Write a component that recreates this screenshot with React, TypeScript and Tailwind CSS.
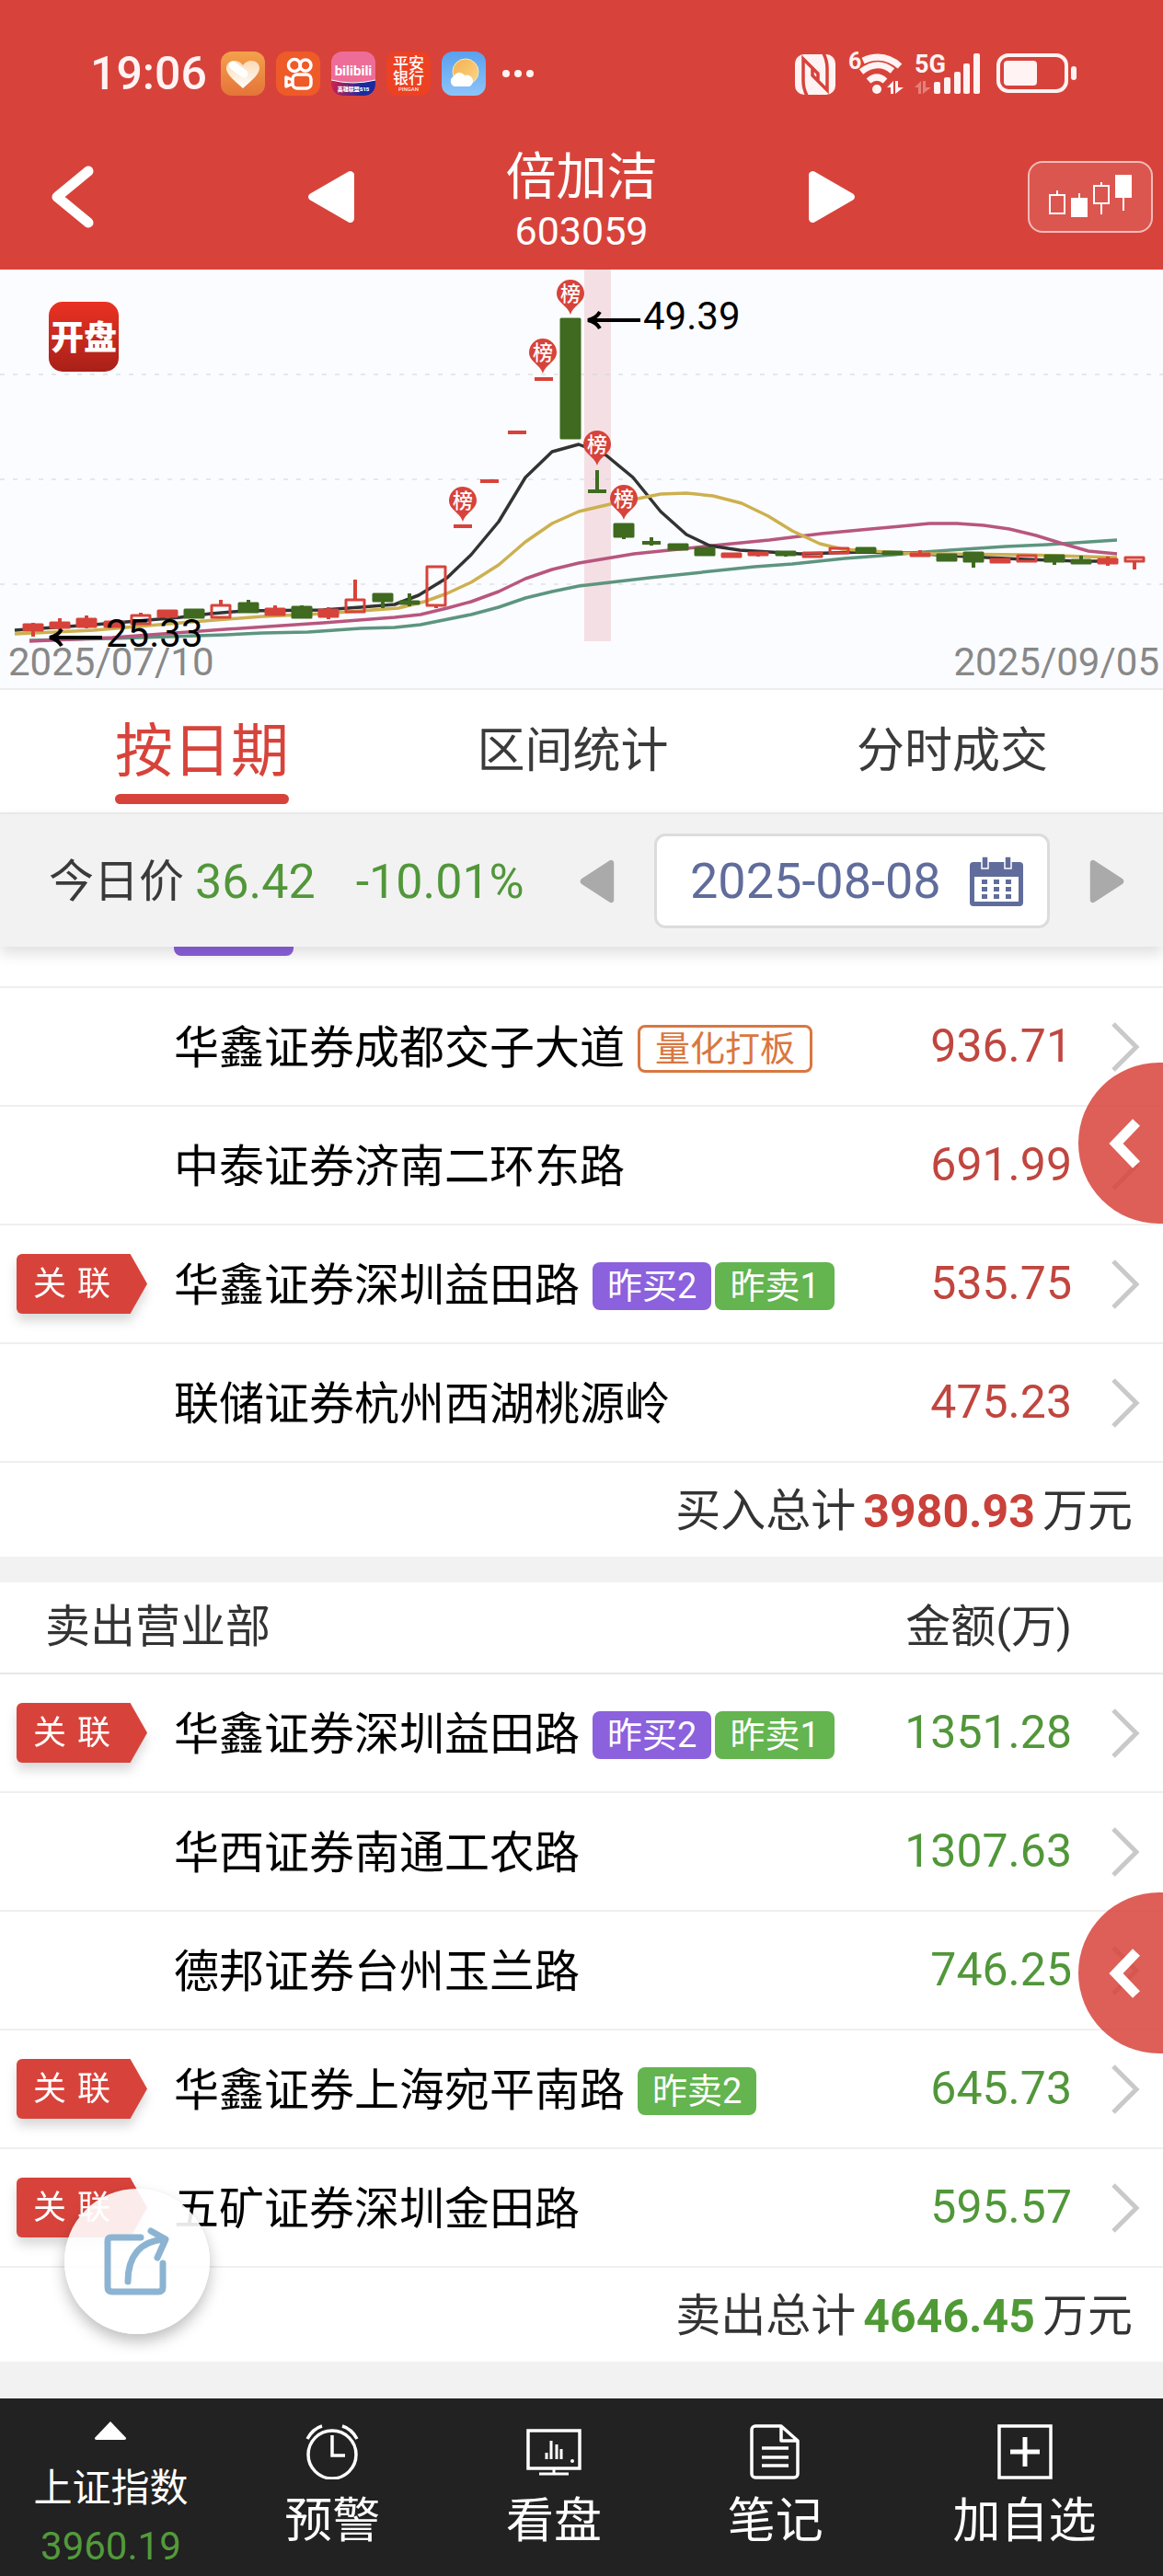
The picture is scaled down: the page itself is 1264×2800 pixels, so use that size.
import { ReactNode, useState } from 'react'

const RED = '#d7433b'
const GREEN = '#3f6a20'

type Candle = {
    up: boolean
    body: [number, number]
    high?: number
    low?: number
    kind?: 'hollow' | 'flat'
}

// y values are in chart units, one entry per trading day
const candles: Candle[] = [
    { up: true, body: [386, 392], high: 384, low: 399 },
    { up: true, body: [384, 389], high: 379, low: 392 },
    { up: true, body: [380, 388], high: 376, low: 390 },
    { up: true, body: [383, 388] },
    { up: true, body: [376, 385], high: 373, kind: 'hollow' },
    { up: true, body: [371, 377], low: 379 },
    { up: false, body: [370, 378] },
    { up: true, body: [365, 378], high: 359, kind: 'hollow' },
    { up: false, body: [363, 372], high: 359 },
    { up: true, body: [369, 375], high: 365, low: 376 },
    { up: false, body: [367, 378], high: 365 },
    { up: true, body: [370, 377], high: 367, low: 380 },
    { up: true, body: [359, 372], high: 337, kind: 'hollow' },
    { up: false, body: [353, 360], low: 368 },
    { up: false, body: [361, 363], high: 352, low: 366 },
    { up: true, body: [323, 365], low: 368, kind: 'hollow' },
    { up: true, body: [279, 279], kind: 'flat' },
    { up: true, body: [230, 230], kind: 'flat' },
    { up: true, body: [177, 177], kind: 'flat' },
    { up: true, body: [119, 119], kind: 'flat' },
    { up: false, body: [54, 183] },
    { up: false, body: [241, 241], high: 218, kind: 'flat' },
    { up: false, body: [277, 290], low: 293 },
    { up: false, body: [297, 297], high: 291, low: 300, kind: 'flat' },
    { up: false, body: [299, 304] },
    { up: false, body: [303, 310] },
    { up: true, body: [309, 312] },
    { up: true, body: [308, 310], low: 312 },
    { up: false, body: [307, 310], low: 312 },
    { up: true, body: [308, 312], kind: 'hollow' },
    { up: true, body: [303, 308], kind: 'hollow' },
    { up: false, body: [303, 307] },
    { up: false, body: [307, 309] },
    { up: true, body: [309, 311], high: 305 },
    { up: false, body: [310, 316] },
    { up: false, body: [308, 317], low: 324 },
    { up: true, body: [315, 318] },
    { up: true, body: [311, 317], kind: 'hollow' },
    { up: false, body: [311, 317], low: 321 },
    { up: false, body: [316, 319], high: 311 },
    { up: true, body: [315, 319], high: 312, low: 322 },
    { up: true, body: [313, 317], low: 326, kind: 'hollow' },
]

const averages = [
    { color: '#5d957f', points: '32,403 122,401 245,397 286,395 335,394 392,390 429,389 457,386 512,375 542,367 571,357 600,350 629,344 706,335 820,323 861,320 918,314 971,310 991,308 1032,305 1093,301 1138,299 1214,294' },
    { color: '#b8567e', points: '32,404 122,400 245,391 351,384 429,378 457,375 486,368 512,361 542,350 571,336 600,326 629,319 689,309 775,300 836,294 893,287 946,282 979,279 1010,276 1040,276 1069,278 1097,282 1126,289 1155,298 1183,306 1214,309' },
    { color: '#333333', points: '16,392 102,386 196,378 229,374 265,371 351,370 392,367 429,364 455,354 486,335 512,310 542,274 571,226 600,198 629,190 659,202 688,226 718,263 746,288 771,300 804,305 869,309 938,307 991,308 1032,311 1114,315 1175,317 1214,317' },
    { color: '#cdb04f', points: '16,396 102,392 196,384 286,377 351,374 433,368 461,361 486,352 512,340 542,321 571,296 600,276 629,263 663,255 718,244 746,243 775,246 806,254 835,268 861,284 891,298 916,304 979,308 1016,309 1114,310 1214,313' },
]

const pins = [
    { x: 503, y: 274 },
    { x: 590, y: 113 },
    { x: 620, y: 49 },
    { x: 649, y: 213 },
    { x: 678, y: 272 },
]

type Tag = { text: string; kind: 'outline' | 'purple' | 'green' }
type Seat = { name: string; amount: string; linked?: boolean; tags?: Tag[] }

const tagStyles = {
    outline: 'border-[3px] border-[#d9773f] text-[#d9773f] px-4 mr-1',
    purple: 'bg-[#8b61dd] text-white px-4',
    green: 'bg-[#64b44f] text-white px-4',
}

const buySeats: Seat[] = [
    { name: '华鑫证券成都交子大道', amount: '936.71', tags: [{ text: '量化打板', kind: 'outline' }] },
    { name: '中泰证券济南二环东路', amount: '691.99' },
    { name: '华鑫证券深圳益田路', amount: '535.75', linked: true, tags: [{ text: '昨买2', kind: 'purple' }, { text: '昨卖1', kind: 'green' }] },
    { name: '联储证券杭州西湖桃源岭', amount: '475.23' },
]

const sellSeats: Seat[] = [
    { name: '华鑫证券深圳益田路', amount: '1351.28', linked: true, tags: [{ text: '昨买2', kind: 'purple' }, { text: '昨卖1', kind: 'green' }] },
    { name: '华西证券南通工农路', amount: '1307.63' },
    { name: '德邦证券台州玉兰路', amount: '746.25' },
    { name: '华鑫证券上海宛平南路', amount: '645.73', linked: true, tags: [{ text: '昨卖2', kind: 'green' }] },
    { name: '五矿证券深圳金田路', amount: '595.57', linked: true },
]

const tabs = ['按日期', '区间统计', '分时成交']

const Triangle = ({ className, flip }: { className: string; flip?: boolean }) => (
    <svg viewBox="0 0 50 56" preserveAspectRatio="none" className={className} fill="currentColor" stroke="currentColor" strokeWidth="8" strokeLinejoin="round">
        <path d={flip ? 'M5 5v46l40-23z' : 'M45 5v46L5 28z'} />
    </svg>
)

const StatusBar = () => (
    <div className="flex items-center justify-between pl-[98px] pr-[94px] h-12 text-[#fff3f3]">
        <div className="flex items-center gap-3">
            <span className="mr-[3px] text-[50px] leading-[48px] font-medium">19:06</span>
            <svg viewBox="0 0 48 48" className="size-12">
                <defs>
                    <linearGradient id="heartBg" x2="0" y2="1"><stop stopColor="#f3a14b" /><stop offset="1" stopColor="#e5743a" /></linearGradient>
                    <linearGradient id="heartFill" x2="0" y2="1"><stop stopColor="#fbd9b4" /><stop offset="1" stopColor="#fff" /></linearGradient>
                </defs>
                <rect width="48" height="48" rx="12" fill="url(#heartBg)" />
                <path d="M24 40C18 34 6 26 6 18c0-9 13-11 18-3 5-8 18-6 18 3 0 8-12 16-18 22z" fill="url(#heartFill)" />
                <path d="M13 15l12 9" stroke="#fff" strokeWidth="9" strokeLinecap="round" />
            </svg>
            <svg viewBox="0 0 48 48" className="size-12" fill="none" stroke="#fff" strokeWidth="3.5">
                <rect width="48" height="48" rx="12" fill="#ef5a29" stroke="none" />
                <circle cx="20" cy="15" r="6.5" />
                <circle cx="32" cy="15" r="6" />
                <rect x="18" y="25" width="20" height="15" rx="5" />
                <path d="M18 31l-7-3v10l7-3" strokeLinejoin="round" />
            </svg>
            <svg viewBox="0 0 48 48" className="size-12">
                <defs>
                    <clipPath id="biliClip"><rect width="48" height="48" rx="12" /></clipPath>
                    <linearGradient id="biliBand"><stop stopColor="#d3204b" /><stop offset="0.7" stopColor="#1b2a9c" /></linearGradient>
                </defs>
                <g clipPath="url(#biliClip)">
                    <rect width="48" height="48" fill="#ee6d98" />
                    <path d="M0 31q24 6 48 0v17H0z" fill="url(#biliBand)" />
                    <path d="M0 31q24 6 48 0" stroke="#fff" fill="none" />
                </g>
                <text x="24" y="26" textAnchor="middle" fontSize="15" fontWeight="700" fill="#fff">bilibili</text>
                <text x="24" y="43" textAnchor="middle" fontSize="6" fontWeight="900" fill="#fff">英雄联盟S15</text>
            </svg>
            <svg viewBox="0 0 48 48" className="size-12">
                <rect width="48" height="48" rx="12" fill="#ec4123" />
                <text x="24" y="19" textAnchor="middle" fontSize="17" fontWeight="500" fill="#fff">平安</text>
                <text x="24" y="35" textAnchor="middle" fontSize="17" fontWeight="500" fill="#fff">银行</text>
                <text x="24" y="43" textAnchor="middle" fontSize="6" fill="#fff">PINGAN</text>
            </svg>
            <svg viewBox="0 0 48 48" className="size-12">
                <defs>
                    <linearGradient id="skyBg" x2="0" y2="1"><stop stopColor="#5aa0ee" /><stop offset="1" stopColor="#8dc4f8" /></linearGradient>
                    <linearGradient id="sun" x2="1" y2="1"><stop stopColor="#f4b04e" /><stop offset="1" stopColor="#fbd68a" /></linearGradient>
                </defs>
                <rect width="48" height="48" rx="12" fill="url(#skyBg)" />
                <circle cx="26" cy="22" r="14" fill="url(#sun)" stroke="#ffe9a8" />
                <path d="M14 38a6 6 0 0 1-1-11 7 7 0 0 1 12-1 6 6 0 0 1 5 12z" fill="#fff" />
            </svg>
            <svg viewBox="0 0 36 8" className="ml-[6px] w-9 h-2" fill="currentColor">
                <circle cx="4" cy="4" r="4" />
                <circle cx="17" cy="4" r="4" />
                <circle cx="30" cy="4" r="4" />
            </svg>
        </div>
        <svg viewBox="864 54 306 50" className="w-[306px] h-[50px]" fill="currentColor">
            <rect x="864" y="58" width="44" height="44" rx="10" />
            <path d="M877 103c-2-4-4-9-4-16V63l16 16v8M895 57c2 4 4 9 4 16v24l-16-16v-8" fill="none" stroke="#d7433b" strokeWidth="3.5" />
            <text x="922" y="74" fontSize="25" fontWeight="700">6</text>
            <g fill="none" stroke="currentColor" strokeWidth="7">
                <path d="M938 65q22-10 40 6" />
                <path d="M936 77q18-14 34-1" />
                <path d="M944 87q9-8 18 0" />
            </g>
            <circle cx="953" cy="96" r="5" />
            <path d="M964 94l7-7v14h-3v-7zM973 87h3v7h6l-9 7z" />
            <text x="994" y="78" fontSize="27" fontWeight="700">5G</text>
            <path d="M994 94l7-7v14h-3v-7zM1003 87h3v7h6l-9 7z" opacity="0.35" />
            <rect x="1015" y="88" width="7" height="13" rx="2" />
            <rect x="1026" y="83" width="7" height="18" rx="2" />
            <rect x="1037" y="77" width="7" height="24" rx="2" />
            <rect x="1047" y="68" width="7" height="33" rx="2" />
            <rect x="1058" y="57" width="7" height="44" rx="2" />
            <rect x="1085" y="59" width="74" height="39" rx="11" fill="none" stroke="currentColor" strokeWidth="4" />
            <rect x="1091" y="65" width="36" height="27" rx="4" />
            <rect x="1164" y="71" width="6" height="15" rx="3" />
        </svg>
    </div>
)

const Header = () => (
    <header className="bg-[#d7433b] pt-14 pb-px text-white">
        <StatusBar />
        <div className="mt-8 h-[156px] grid grid-cols-[1fr_auto_1fr] items-center">
            <button aria-label="返回" className="justify-self-start ml-[54px]">
                <svg viewBox="0 0 50 72" className="w-[50px] h-[72px]" fill="none" stroke="currentColor" strokeWidth="11" strokeLinecap="round" strokeLinejoin="round">
                    <path d="M42 8L8 36l34 28" />
                </svg>
            </button>
            <div className="flex items-center gap-[163px]">
                <button aria-label="上一只"><Triangle className="w-[52px] h-[58px]" /></button>
                <div className="pt-4 text-center">
                    <h1 className="text-[55px] leading-[58px]">倍加洁</h1>
                    <p className="text-[43px] leading-[60px]">603059</p>
                </div>
                <button aria-label="下一只"><Triangle flip className="w-[52px] h-[58px]" /></button>
            </div>
            <button aria-label="K线" className="justify-self-end mr-[11px] w-[136px] h-[78px] flex items-center justify-center rounded-2xl border-2 border-[#f3bcb9] bg-white/10">
                <svg viewBox="0 0 92 48" className="w-[92px] h-12" stroke="currentColor" strokeWidth="2">
                    <path d="M10 17v5M34 20v6M58 8v4M58 32v11M82 25v14" />
                    <rect x="2" y="22" width="16" height="20" fill="none" />
                    <rect x="26" y="26" width="16" height="19" fill="currentColor" />
                    <rect x="50" y="12" width="16" height="19" fill="none" />
                    <rect x="74" y="1" width="16" height="23" fill="currentColor" />
                </svg>
            </button>
        </div>
    </header>
)

const CandleMark = ({ candle, x }: { candle: Candle; x: number }) => {
    const color = candle.up ? RED : GREEN
    const [top, bottom] = candle.body

    return (
        <g stroke={color} fill={candle.kind === 'hollow' ? 'none' : color}>
            {candle.high !== undefined && <path d={`M${x} ${candle.high}V${top}`} strokeWidth="4" />}
            {candle.low !== undefined && <path d={`M${x} ${bottom}V${candle.low}`} strokeWidth="4" />}
            {candle.kind === 'flat' ? (
                <path d={`M${x - 10} ${top}h20`} strokeWidth="4" />
            ) : (
                <rect x={x - 10} y={top} width="20" height={bottom - top} strokeWidth="3" strokeLinejoin="round" />
            )}
        </g>
    )
}

const Chart = () => (
    <section className="bg-[#fbfcff] border-b-2 border-[#ececec]">
        <svg viewBox="0 0 1264 404" className="block w-full overflow-visible">
            <defs>
                <linearGradient id="logoBg" x2="0" y2="1"><stop stopColor="#ea3223" /><stop offset="1" stopColor="#a82018" /></linearGradient>
            </defs>
            <rect x="635" width="29" height="404" fill="#f4e0e4" />
            {[114, 228, 342].map((y) => (
                <path key={y} d={`M0 ${y}H1264`} stroke="#cfd2d6" strokeWidth="1" strokeDasharray="5 9" />
            ))}
            <rect x="53" y="35" width="76" height="76" rx="15" fill="url(#logoBg)" />
            <text x="91" y="87" textAnchor="middle" fontSize="36" fontWeight="900" fill="#fff">开盘</text>
            {averages.map((line) => (
                <polyline key={line.color} points={line.points} fill="none" stroke={line.color} strokeWidth="3.5" strokeLinejoin="round" />
            ))}
            {candles.map((candle, i) => (
                <CandleMark key={i} candle={candle} x={Math.round(36 + i * 29.2)} />
            ))}
            {pins.map((pin) => (
                <g key={pin.x}>
                    <path d={`M${pin.x} ${pin.y}c-3-10-15-13-15-23a15 15 0 0 1 30 0c0 10-12 13-15 23z`} fill={RED} />
                    <text x={pin.x} y={pin.y - 15} textAnchor="middle" fontSize="22" fontWeight="500" fill="#fff">榜</text>
                </g>
            ))}
            <g fill="none" stroke="#000" strokeWidth="4">
                <path d="M696 55H640M652 46q-4 7-13 9q9 2 13 9" />
                <path d="M111 400H56M67 391q-4 7-13 9q9 2 13 9" />
            </g>
            <text x="699" y="65" fontSize="42">49.39</text>
            <text x="115" y="410" fontSize="42">25.33</text>
        </svg>
        <div className="flex justify-between pl-[9px] pr-1 pb-[6px] text-[42px] leading-[45px] text-[#888]">
            <span>2025/07/10</span>
            <span>2025/09/05</span>
        </div>
    </section>
)

const DateBar = () => (
    <div className="relative z-10 flex items-center justify-between h-[146px] pl-[53px] pr-[42px] border-t-2 border-[#e8e8e8] bg-[#f2f2f2] shadow-[0_8px_14px_rgba(0,0,0,0.12)] leading-[60px]">
        <div className="flex items-center pt-1 text-[52px] text-[#51973a]">
            <p className="text-[49px] text-[#3a3a3a]">今日价</p>
            <p className="ml-3">36.42</p>
            <p className="ml-11">-10.01%</p>
        </div>
        <div className="flex items-center gap-[43px] pt-px text-[#aaa]">
            <button aria-label="前一天"><Triangle className="w-[38px] h-12" /></button>
            <button className="flex items-center justify-between w-[430px] h-[103px] pl-9 pr-[26px] rounded-xl border-[3px] border-[#dcdcdc] bg-white text-[54px] text-[#606c9b]">
                2025-08-08
                <svg viewBox="0 0 58 54" className="w-[58px] h-[54px]" fill="currentColor">
                    <path fillRule="evenodd" d="M4 6H54a4 4 0 0 1 4 4V50a4 4 0 0 1-4 4H4a4 4 0 0 1-4-4V10a4 4 0 0 1 4-4zM5 22V49H53V22z" />
                    <path d="M13 0h7v13h-7zM38 0h7v13h-7z" stroke="#fff" strokeWidth="1.5" />
                    {[13, 26, 39].map((x) => (
                        <path key={x} d={`M${x} 25h6v5h-6zM${x} 33h6v5h-6zM${x} 41h6v5h-6z`} />
                    ))}
                </svg>
            </button>
            <button aria-label="后一天"><Triangle flip className="w-[38px] h-12" /></button>
        </div>
    </div>
)

const LinkedBadge = () => (
    <span className="drop-shadow-[0_8px_6px_rgba(0,0,0,0.15)]">
        <span className="flex items-center gap-3 w-[142px] h-[65px] pl-[18px] rounded-l-md bg-[#d7433b] text-white text-[36px] leading-[64px] [clip-path:polygon(0_0,87%_0,100%_50%,87%_100%,0_100%)]">
            <span>关</span>
            <span>联</span>
        </span>
    </span>
)

const SeatTable = ({ seats, color, children }: { seats: Seat[]; color: string; children?: ReactNode }) => (
    <table className="w-full border-separate border-spacing-0">
        {children}
        <tbody>
            {seats.map((seat) => (
                <tr key={seat.name} className="h-[129px]">
                    <td className="p-0 border-b-2 border-[#efefef]">
                        <div className="flex items-center">
                            <div className="w-[189px] pl-[18px] shrink-0">{seat.linked && <LinkedBadge />}</div>
                            <a href="#" className="pt-1 text-[49px] leading-[64px] whitespace-nowrap">{seat.name}</a>
                            <div className="flex gap-1 pl-[14px] pt-1">
                                {seat.tags?.map((tag) => (
                                    <span key={tag.text} className={`flex items-center h-[52px] rounded-lg text-[38px] leading-[46px] whitespace-nowrap ${tagStyles[tag.kind]}`}>
                                        {tag.text}
                                    </span>
                                ))}
                            </div>
                        </div>
                    </td>
                    <td className={`p-0 pb-[2px] border-b-2 border-[#efefef] text-right text-[50px] leading-[60px] ${color}`}>{seat.amount}</td>
                    <td className="p-0 w-[99px] border-b-2 border-[#efefef]">
                        <svg viewBox="0 0 32 54" className="ml-[42px] w-8 h-[54px]" fill="none" stroke="#c9c9c9" strokeWidth="5">
                            <path d="M3 2l25 25L3 52" />
                        </svg>
                    </td>
                </tr>
            ))}
        </tbody>
    </table>
)

const Total = ({ label, value, color }: { label: string; value: string; color: string }) => (
    <p className="flex items-center justify-end gap-2 h-[102px] pt-1 pr-[33px] text-[49px] leading-[64px] text-[#333]">
        {label}
        <strong className={`text-[50px] font-bold ${color}`}>{value}</strong>
        万元
    </p>
)

const SideHandle = ({ className }: { className: string }) => (
    <button aria-label="展开" className={`absolute -right-[83px] size-[175px] rounded-full bg-[#d7433b]/85 ${className}`}>
        <svg viewBox="0 0 34 54" className="ml-[33px] w-[34px] h-[54px]" fill="none" stroke="#fff" strokeWidth="11">
            <path d="M30 4L8 27l22 23" />
        </svg>
    </button>
)

const NavItem = ({ label, className, children }: { label: string; className: string; children: ReactNode }) => (
    <a href="#" className={`flex flex-col items-center pt-7 ${className}`}>
        <svg viewBox="0 0 60 60" className="size-[60px]" fill="none" stroke="currentColor" strokeWidth="3.5">{children}</svg>
        <span className="mt-[14px] text-[52px] leading-[64px]">{label}</span>
    </a>
)

const BottomNav = () => (
    <nav className="flex h-[193px] bg-[#222] text-white">
        <a href="#" className="flex-4 flex flex-col items-center pt-[25px]">
            <svg viewBox="0 0 36 21" className="w-9 h-[21px]" fill="currentColor"><path d="M18 0l18 19q0 2-2 2H2q-2 0-2-2z" /></svg>
            <span className="mt-[22px] text-[42px] leading-[62px]">上证指数</span>
            <span className="text-[42px] leading-[64px] text-[#539a3b]">3960.19</span>
        </a>
        <NavItem label="预警" className="flex-4">
            <circle cx="30" cy="33" r="26" />
            <path d="M30 12v22h14M3 16Q9 5 19 2M57 16Q51 5 41 2" />
        </NavItem>
        <NavItem label="看盘" className="flex-4">
            <rect x="2" y="7" width="56" height="41" />
            <path d="M30 48v6M14 54h32M22 31v7M27 18v20M33 22v16M38 27v11" strokeWidth="3" />
            <circle cx="50" cy="40" r="2" fill="currentColor" stroke="none" />
        </NavItem>
        <NavItem label="笔记" className="flex-4">
            <path d="M8 2H36L54 18V54a4 4 0 0 1-4 4H8a4 4 0 0 1-4-4V6a4 4 0 0 1 4-4zM36 2V18H54M15 26H44M15 36H44M15 45H44" strokeLinejoin="round" />
        </NavItem>
        <NavItem label="加自选" className="flex-5">
            <rect x="2" y="2" width="56" height="56" />
            <path d="M30 14v32M14 30h32" strokeWidth="5" />
        </NavItem>
    </nav>
)

const App = () => {
    const [activeTab, setActiveTab] = useState(0)

    return (
        <div className="relative overflow-hidden bg-white text-black font-['Roboto','Noto_Sans_CJK_SC',sans-serif]" lang="zh-CN">
            <Header />
            <Chart />
            <div className="flex justify-between items-start h-[133px] px-[125px]">
                {tabs.map((tab, i) => (
                    <button
                        key={tab}
                        onClick={() => setActiveTab(i)}
                        className={i === activeTab
                            ? 'pt-[21px] text-[63px] leading-[92px] text-[#d7433b]'
                            : 'pt-[21px] text-[52px] leading-[92px] text-[#3a3a3a]'}
                    >
                        {tab}
                        {i === activeTab && <span className="block h-[11px] rounded-full bg-[#d7433b]" />}
                    </button>
                ))}
            </div>
            <DateBar />
            <main>
                <div className="h-[45px] pl-[189px] border-b-2 border-[#efefef]">
                    <div className="w-[130px] h-[10px] rounded-b-lg bg-[#8b61dd]" />
                </div>
                <SeatTable seats={buySeats} color="text-[#c0463f]" />
                <Total label="买入总计" value="3980.93" color="text-[#c9413a]" />
                <div className="h-7 bg-[#f2f2f2]" />
                <SeatTable seats={sellSeats} color="text-[#51973a]">
                    <thead>
                        <tr className="h-[100px] text-[49px] leading-[64px] text-[#333]">
                            <th className="p-0 pl-[49px] pb-px border-b-2 border-[#e8e8e8] text-left font-normal">卖出营业部</th>
                            <th className="p-0 pb-px border-b-2 border-[#e8e8e8] text-right font-normal">金额(万)</th>
                            <th className="p-0 border-b-2 border-[#e8e8e8]" />
                        </tr>
                    </thead>
                </SeatTable>
                <Total label="卖出总计" value="4646.45" color="text-[#4f9a35]" />
                <div className="h-10 bg-[#f2f2f2]" />
            </main>
            <BottomNav />
            <SideHandle className="top-[1155px]" />
            <SideHandle className="top-[2057px]" />
            <button aria-label="分享" className="absolute left-[70px] bottom-[263px] size-[158px] flex items-center justify-center rounded-full bg-white/90 shadow-[0_8px_16px_rgba(0,0,0,0.25)]">
                <svg viewBox="0 0 72 76" className="w-[72px] h-[76px]" fill="none" stroke="#8cb4d2" strokeWidth="7" strokeLinecap="round" strokeLinejoin="round">
                    <path d="M40 12H8q-4 0-4 4V66q0 5 5 5H59q5 0 5-5V40M26 60C26 34 38 16 66 14M51 5L67 14 58 34" />
                </svg>
            </button>
        </div>
    )
}

export default App
